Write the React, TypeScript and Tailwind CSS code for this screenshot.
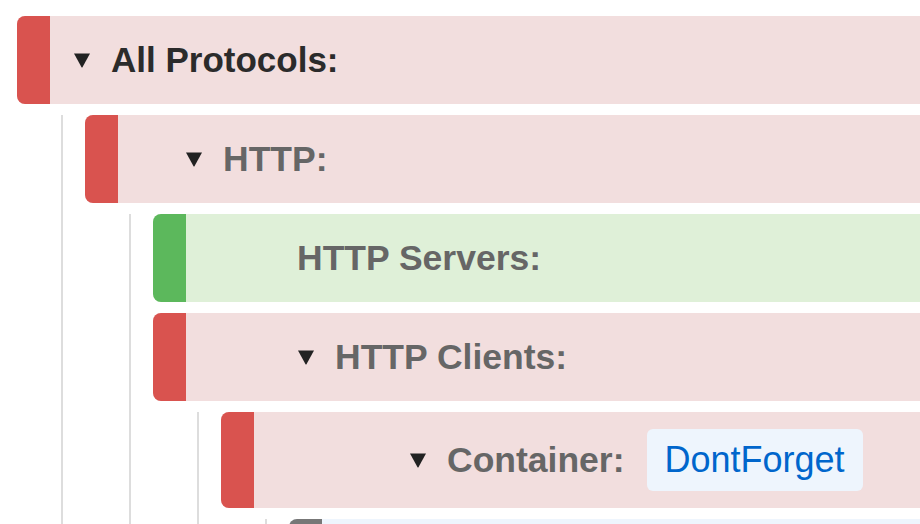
import type { ReactNode } from "react";

type Tone = "danger" | "success" | "info";

const TONES: Record<Tone, { bar: string; bg: string }> = {
  danger: { bar: "bg-[#d9534f]", bg: "bg-[#f2dede]" },
  success: { bar: "bg-[#5cb85c]", bg: "bg-[#dff0d8]" },
  info: { bar: "bg-[#777777]", bg: "bg-[#eef5fd]" }
};

const PAD = ["pl-[23px]", "pl-[67px]", "pl-[111px]", "pl-[155px]", "pl-[199px]"];

function Caret() {
  return (
    <svg width="18" height="16" viewBox="0 0 18 16" className="shrink-0 mr-[20px]">
      <path d="M1 1.5 H17 L9.6 15 Q9 16 8.4 15 Z" fill="#222" />
    </svg>
  );
}

function Node({
  label,
  tone,
  level,
  open,
  dark,
  tag,
  children
}: {
  label?: string;
  tone: Tone;
  level: number;
  open?: boolean;
  dark?: boolean;
  tag?: string;
  children?: ReactNode;
}) {
  const t = TONES[tone];
  return (
    <div>
      <div className={`flex rounded-l-[8px] overflow-hidden ${t.bg}`}>
        <div className={`w-[33px] shrink-0 ${t.bar}`} />
        <div className={`flex items-center py-[17px] min-h-[88px] ${PAD[level]}`}>
          {open && <Caret />}
          {label && (
            <span
              className={`leading-[54px] font-bold whitespace-nowrap ${
                dark ? "text-[35px] text-[#2b2b2b]" : "text-[35.5px] text-[#666666]"
              }`}
            >
              {label}
            </span>
          )}
          {tag && (
            <span className="ml-[22px] rounded-[6px] bg-[#eef5fd] px-[18px] py-[13px] text-[36px] leading-[36px] text-[#0066cc] whitespace-nowrap">
              {tag}
            </span>
          )}
        </div>
      </div>
      {children && (
        <div className="mt-[11px] ml-[44px] border-l-2 border-[#dddddd] pl-[22px] flex flex-col gap-[11px]">
          {children}
        </div>
      )}
    </div>
  );
}

export default function App() {
  return (
    <div
      className="w-[920px] h-[524px] overflow-hidden bg-white pt-[16px] pl-[17px]"
      style={{ fontFamily: '"Liberation Sans", Arial, sans-serif' }}
    >
      <Node label="All Protocols:" tone="danger" level={0} open dark>
        <Node label="HTTP:" tone="danger" level={1} open>
          <Node label="HTTP Servers:" tone="success" level={2} />
          <Node label="HTTP Clients:" tone="danger" level={2} open>
            <Node label="Container:" tone="danger" level={3} open tag="DontForget">
              <Node tone="info" level={4} />
            </Node>
          </Node>
        </Node>
      </Node>
    </div>
  );
}
